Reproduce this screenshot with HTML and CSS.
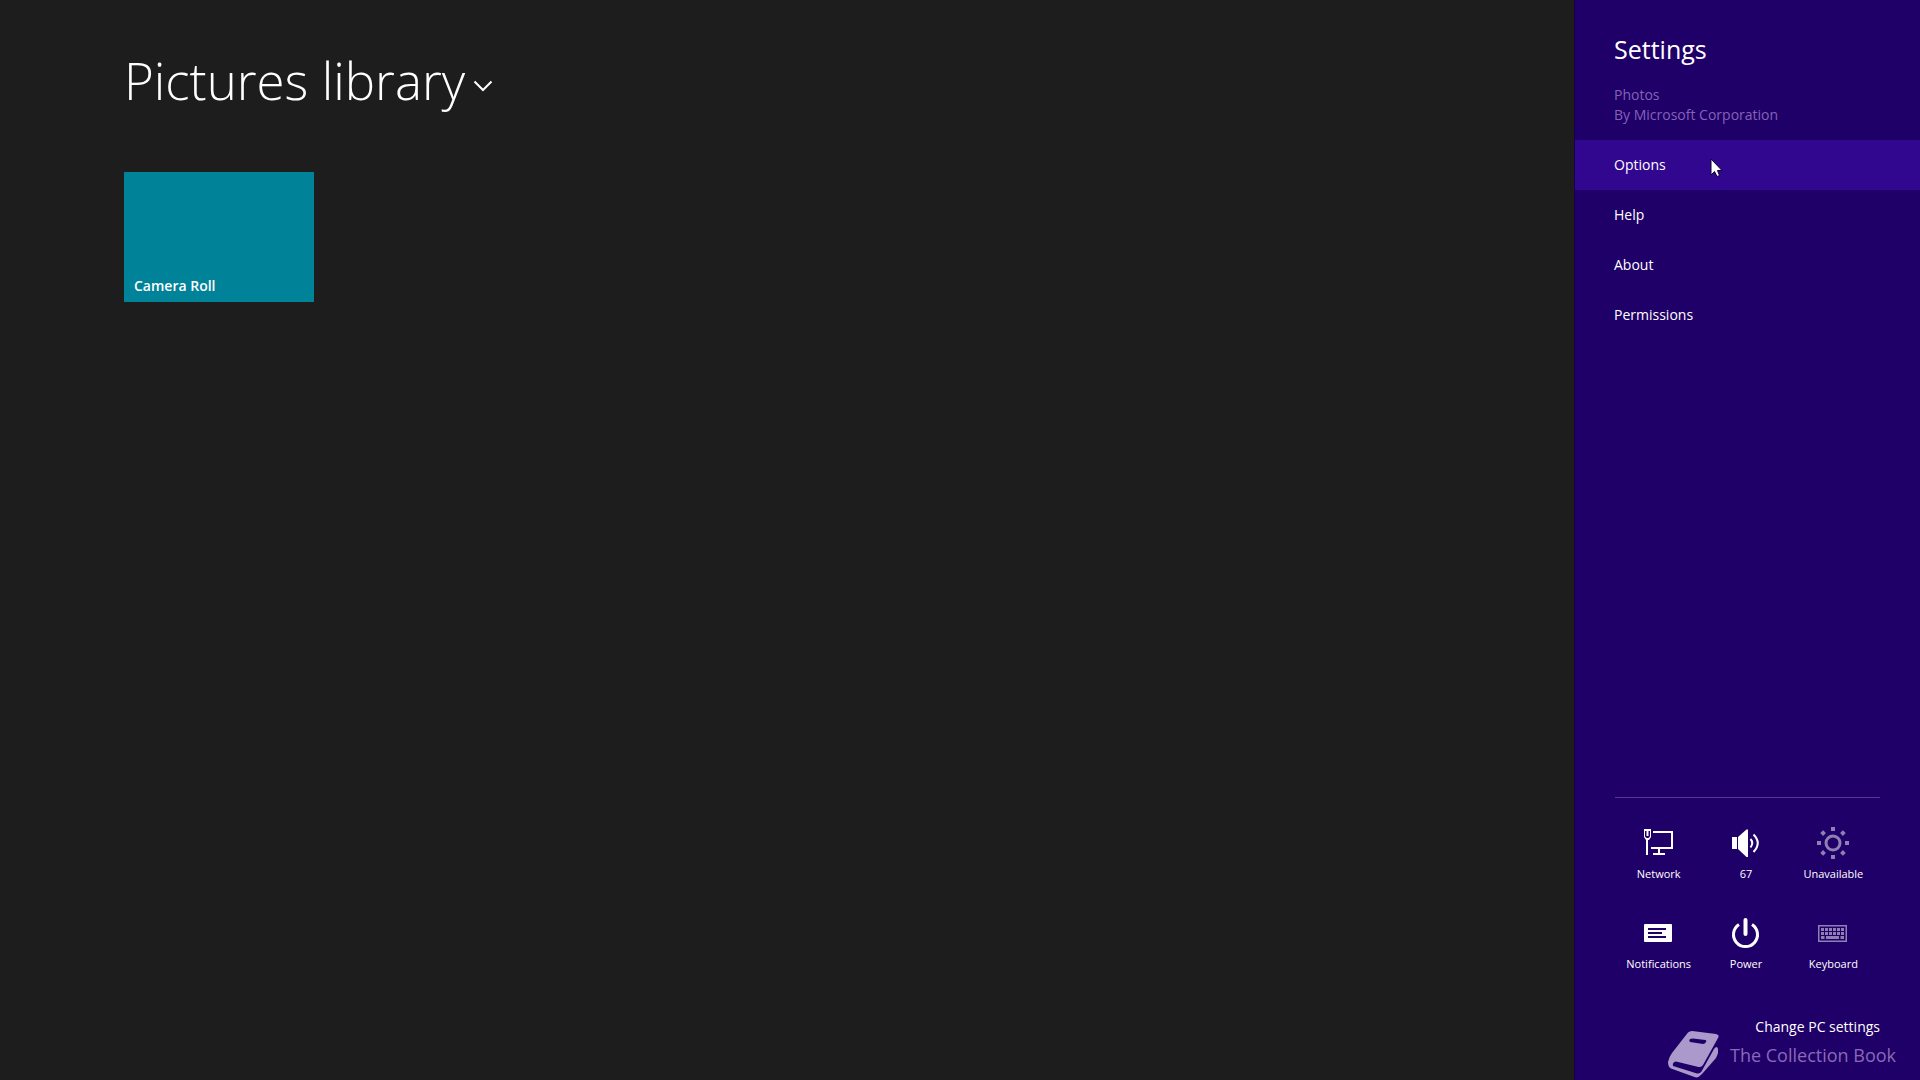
FILE: index.html
```html
<!DOCTYPE html>
<html lang="en">
<head>
<meta charset="utf-8">
<title>Photos</title>
<meta name="viewport" content="width=device-width, initial-scale=1">
<link rel="stylesheet" href="styles.css">
</head>
<body>
<div class="screen">
  <main class="library">
    <h1 class="library-heading">
      <button class="library-title" type="button">
        <span>Pictures library</span>
        <svg class="chevron" viewBox="0 0 20 12" aria-hidden="true"><path d="M1.500 1.500 10 10 18.500 1.500"/></svg>
      </button>
    </h1>
    <div class="albums">
      <button class="album" type="button">Camera Roll</button>
    </div>
  </main>

  <aside class="settings">
    <header class="settings-header">
      <h2 class="settings-title">Settings</h2>
      <p class="settings-app">Photos<br>By Microsoft Corporation</p>
    </header>
    <nav class="commands">
      <a class="command command-active" href="#options">Options</a>
      <a class="command" href="#help">Help</a>
      <a class="command" href="#about">About</a>
      <a class="command" href="#permissions">Permissions</a>
    </nav>

    <footer class="system">
      <div class="system-grid">
        <button class="tile" type="button">
          <svg class="tile-icon" viewBox="0 0 32 32" aria-hidden="true">
            <path class="line" d="M10 3H29V19H8M16 19V25M10 25H22M4 11V26"/>
            <path class="fill" fill-rule="evenodd" d="M1 0H8V8L6 11H3L1 8ZM2 2V7.500L3.500 9H5.500L7 7.500V2ZM3.500 2H5.500V7H3.500Z"/>
          </svg>
          <span>Network</span>
        </button>
        <button class="tile" type="button">
          <svg class="tile-icon" viewBox="0 0 32 32" aria-hidden="true">
            <path class="fill" d="M2 8H7V20H2ZM8 8 16.500 .5H18V28H16.500L8 20Z"/>
            <path class="line" d="M20.500 10Q24 14 20.500 18.500M23.500 5.500Q32 14 23.500 23"/>
          </svg>
          <span>67</span>
        </button>
        <button class="tile" type="button">
          <svg class="tile-icon dim" viewBox="0 0 32 32" aria-hidden="true">
            <circle class="thick" cx="16" cy="14" r="7"/>
            <path class="heavy" d="M16 -2V2M16 26V30M0 14H4M28 14H32M4.700 2.700 7.500 5.500M24.500 22.500 27.300 25.300M4.700 25.300 7.500 22.500M24.500 5.500 27.300 2.700"/>
          </svg>
          <span>Unavailable</span>
        </button>
        <button class="tile" type="button">
          <svg class="tile-icon" viewBox="0 0 32 32" aria-hidden="true">
            <path class="fill" fill-rule="evenodd" d="M2 5H28Q29 5 29 6V22Q29 23 28 23H2Q1 23 1 22V6Q1 5 2 5ZM5 9V11H23V9ZM5 13V15H19V13ZM5 17V19H23V17Z"/>
          </svg>
          <span>Notifications</span>
        </button>
        <button class="tile" type="button">
          <svg class="tile-icon" viewBox="0 0 32 32" aria-hidden="true">
            <path class="thick" d="M9 5.500A12 12 0 1 0 22 5.500"/>
            <path class="heavy" stroke-linecap="round" d="M15.500 1V15"/>
          </svg>
          <span>Power</span>
        </button>
        <button class="tile" type="button">
          <svg class="tile-icon dim" viewBox="0 0 32 32" aria-hidden="true">
            <path class="fill" fill-rule="evenodd" d="M1 6H30V23H1ZM2.500 7.500V21.500H28.500V7.500Z"/>
            <path class="keys" d="M4 10.500H27M4 14.500H27"/>
            <path class="thick" d="M4 18.500H7.500M9 18.500H22M23.500 18.500H27"/>
          </svg>
          <span>Keyboard</span>
        </button>
      </div>
      <a class="pc-settings" href="#pc-settings">Change PC settings</a>
    </footer>
  </aside>

  <div class="watermark">
    <svg class="book" viewBox="0 0 52 48" aria-hidden="true">
      <path fill-rule="evenodd" d="M20 1.500Q21.500 0 24 0L48 3Q52 4 50 7L35 34Q33.500 36.500 30.500 36L8 30.500Q4 31 5 35L29 42.500Q32 43 33.500 40.500L46 18Q49 14 50 18L50 22Q49.500 24 48 27L34 43Q30 47.500 26.500 46L3 37.500Q0 36 0 31Q1 26 4 22ZM22 8Q20.500 9.500 22 11L35 13Q37 13 38 11Q39 9.500 37.500 9L25 7.500Q23 7.500 22 8Z"/>
    </svg>
    <span>The Collection Book</span>
  </div>
  <svg class="cursor" viewBox="0 0 14 20" aria-hidden="true"><path d="M1 1V17L4.500 13.500 7 18.500 9.500 17.500 7.500 12.500H12Z"/></svg>
</div>
</body>
</html>
```
FILE: styles.css
```css
* {
  box-sizing: border-box;
}

body {
  margin: 0;
  background: #1d1d1d;
  color: #fff;
  font-family: "Open Sans", "Noto Sans", sans-serif;
  font-size: 14px;
  line-height: 20px;
}

h1,
h2,
p {
  margin: 0;
  font-weight: 400;
}

button {
  border: 0;
  padding: 0;
  background: none;
  color: inherit;
  font: inherit;
  cursor: pointer;
}

a {
  color: inherit;
  text-decoration: none;
}

svg {
  display: block;
  overflow: visible;
}

.screen {
  position: relative;
  display: flex;
  min-height: 100vh;
}

.library {
  flex: 1;
  padding: 44px 124px;
}

.library-title {
  display: flex;
  align-items: center;
  gap: 8px;
  font-size: 51px;
  font-weight: 300;
  line-height: 72px;
  white-space: nowrap;
}

.chevron {
  width: 20px;
  height: 12px;
  margin-top: 12px;
  fill: none;
  stroke: #fff;
  stroke-width: 2;
}

.albums {
  display: flex;
  flex-wrap: wrap;
  gap: 10px;
  margin-top: 56px;
}

.album {
  display: flex;
  align-items: flex-end;
  width: 190px;
  height: 130px;
  padding: 6px 10px;
  background: #008299;
  font-weight: 600;
}

.settings {
  display: flex;
  flex-direction: column;
  width: 346px;
  border-left: 1px solid #16004c;
  background: #1f0068;
}

.settings-header {
  padding: 28px 39px 15px;
}

.settings-title {
  font-size: 25px;
  line-height: 43px;
}

.settings-app {
  margin-top: 14px;
  color: #8462b8;
}

.commands {
  display: flex;
  flex-direction: column;
}

.command {
  padding: 15px 39px;
}

.command-active {
  background: #320790;
}

.system {
  display: flex;
  flex-direction: column;
  margin: auto 40px 0;
  padding-bottom: 43px;
  border-top: 1px solid #5b3596;
}

.system-grid {
  display: grid;
  grid-template-columns: repeat(3, 1fr);
  padding: 31px 3px 8px 0;
}

.tile {
  display: flex;
  flex-direction: column;
  align-items: center;
  height: 90px;
  gap: 3px;
  font-size: 11px;
}

.tile-icon {
  width: 32px;
  height: 32px;
}

.dim {
  opacity: 0.5;
}

.fill {
  fill: #fff;
}

.line,
.thick,
.heavy,
.keys {
  fill: none;
  stroke: #fff;
  stroke-width: 2;
}

.thick {
  stroke-width: 3;
}

.heavy {
  stroke-width: 4;
}

.keys {
  stroke-width: 3;
  stroke-dasharray: 3 1;
}

.pc-settings {
  align-self: flex-end;
}

/* Laid over the panel's bottom edge */
.watermark {
  position: absolute;
  right: 24px;
  bottom: 1px;
  display: flex;
  align-items: center;
  gap: 10px;
  color: #8969b8;
  font-size: 18px;
  line-height: 24px;
  pointer-events: none;
}

.book {
  width: 52px;
  height: 48px;
  fill: #ab99cb;
}

.cursor {
  position: absolute;
  top: 158px;
  right: 196px;
  width: 14px;
  height: 20px;
  fill: #fff;
  stroke: #110033;
  pointer-events: none;
}
```
